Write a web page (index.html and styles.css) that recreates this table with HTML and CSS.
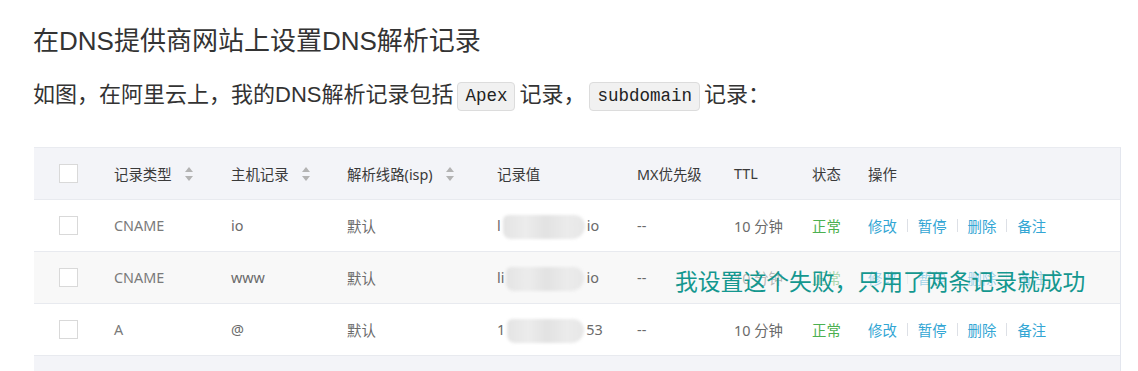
FILE: index.html
```html
<!DOCTYPE html>
<html lang="zh-CN">
<head>
<meta charset="utf-8">
<title>在DNS提供商网站上设置DNS解析记录</title>
<link rel="stylesheet" href="styles.css">
</head>
<body>
<main class="article">
  <h3 class="title">在DNS提供商网站上设置DNS解析记录</h3>
  <p class="lead">如图，在阿里云上，我的DNS解析记录包括<code>Apex</code>记录，<code>subdomain</code>记录：</p>

  <figure class="records">
    <div class="row head">
      <div class="cell check"><span class="box"></span></div>
      <div class="cell">记录类型<span class="sort"></span></div>
      <div class="cell">主机记录<span class="sort"></span></div>
      <div class="cell">解析线路(isp)<span class="sort"></span></div>
      <div class="cell">记录值</div>
      <div class="cell">MX优先级</div>
      <div class="cell">TTL</div>
      <div class="cell">状态</div>
      <div class="cell">操作</div>
    </div>

    <div class="row">
      <div class="cell check"><span class="box"></span></div>
      <div class="cell type">CNAME</div>
      <div class="cell">io</div>
      <div class="cell">默认</div>
      <div class="cell">l<span class="mask mask-wide"></span>io</div>
      <div class="cell">--</div>
      <div class="cell">10 分钟</div>
      <div class="cell ok">正常</div>
      <div class="cell actions"><a>修改</a><i></i><a>暂停</a><i></i><a>删除</a><i></i><a>备注</a></div>
    </div>

    <div class="row hover">
      <div class="cell check"><span class="box"></span></div>
      <div class="cell type">CNAME</div>
      <div class="cell">www</div>
      <div class="cell">默认</div>
      <div class="cell">li<span class="mask mask-mid"></span>io</div>
      <div class="cell">--</div>
      <div class="cell">10 分钟</div>
      <div class="cell ok">正常</div>
      <div class="cell actions"><a>修改</a><i></i><a>暂停</a><i></i><a>删除</a><i></i><a>备注</a></div>
    </div>

    <div class="row">
      <div class="cell check"><span class="box"></span></div>
      <div class="cell type">A</div>
      <div class="cell">@</div>
      <div class="cell">默认</div>
      <div class="cell">1<span class="mask mask-ip"></span>53</div>
      <div class="cell">--</div>
      <div class="cell">10 分钟</div>
      <div class="cell ok">正常</div>
      <div class="cell actions"><a>修改</a><i></i><a>暂停</a><i></i><a>删除</a><i></i><a>备注</a></div>
    </div>

    <div class="foot"></div>

    <span class="note">我设置这个失败，只用了两条记录就成功</span>
  </figure>
</main>
</body>
</html>
```

FILE: styles.css
```css
html, body {
  margin: 0;
  padding: 0;
  background: #fff;
}

.article {
  padding: 26px 17px 0 33px;
  font-family: "Liberation Sans", "Noto Sans CJK SC", sans-serif;
  color: #333;
}

.title {
  margin: 0;
  font-size: 26px;
  font-weight: normal;
  line-height: 31px;
  color: #333;
}

.lead {
  margin: 21px 0 0;
  font-size: 22px;
  line-height: 33px;
  color: #333;
}

.lead code {
  display: inline-block;
  margin: 0 4px;
  padding: 0 7px;
  height: 27px;
  line-height: 27px;
  vertical-align: 1px;
  font-family: "Liberation Mono", monospace;
  font-size: 17.5px;
  color: #222;
  background: #f1f1f1;
  border: 1px solid #dcdcdc;
  border-radius: 4px;
}

/* record list */
.records {
  position: relative;
  margin: 36px 0 0 1px;
  border-top: 1px solid #e9ebf0;
  border-right: 1px solid #e3e6ee;
  font-family: "Noto Sans", "Noto Sans CJK SC", sans-serif;
  font-size: 14.4px;
  color: #6a6a6a;
}

.row {
  display: grid;
  grid-template-columns: 80px 117px 116px 150px 140px 97px 78px 56px 1fr;
  align-items: center;
  height: 51px;
  border-bottom: 1px solid #e8eaef;
  background: #fff;
}

.row.head {
  background: #f3f4f8;
  color: #3a3a3a;
}

.row.hover {
  background: #f8f8f8;
}

.cell {
  display: flex;
  align-items: center;
  white-space: nowrap;
}

.cell.check {
  padding-left: 25px;
}

.box {
  width: 17px;
  height: 17px;
  border: 1px solid #d9d9d9;
  background: #fff;
}

.cell.type {
  color: #7a7a7a;
}

.sort {
  position: relative;
  width: 8px;
  height: 14px;
  margin-left: 13px;
}

.sort::before,
.sort::after {
  content: "";
  position: absolute;
  left: 0;
  border-left: 4px solid transparent;
  border-right: 4px solid transparent;
}

.sort::before {
  top: 0;
  border-bottom: 5px solid #b3b3b3;
}

.sort::after {
  bottom: 0;
  border-top: 5px solid #b3b3b3;
}

.mask {
  display: inline-block;
  height: 24px;
  margin: 2px 2px 0;
  border-radius: 6px 12px 14px 8px;
  background: linear-gradient(90deg, #e4e4e4 0%, #ececec 28%, #e2e2e2 52%, #ebebeb 78%, #e7e7e7 100%);
  filter: blur(1.5px);
}

.mask-wide { width: 82px; }
.mask-mid { width: 78px; }
.mask-ip { width: 77px; }

.ok {
  color: #4cb050;
}

.actions {
  gap: 10px;
}

.actions a {
  color: #33a6d4;
  text-decoration: none;
}

.actions i {
  width: 1px;
  height: 13px;
  background: #dde0e6;
}

.foot {
  height: 16px;
  background: #f3f4f8;
}

/* annotation written over the second row */
.note {
  position: absolute;
  left: 640px;
  top: 121px;
  padding: 0 1px;
  font-family: "Liberation Sans", "Noto Sans CJK SC", sans-serif;
  font-size: 22.8px;
  line-height: 27px;
  color: #14978f;
  background: rgba(248, 248, 248, 0.55);
}
```
